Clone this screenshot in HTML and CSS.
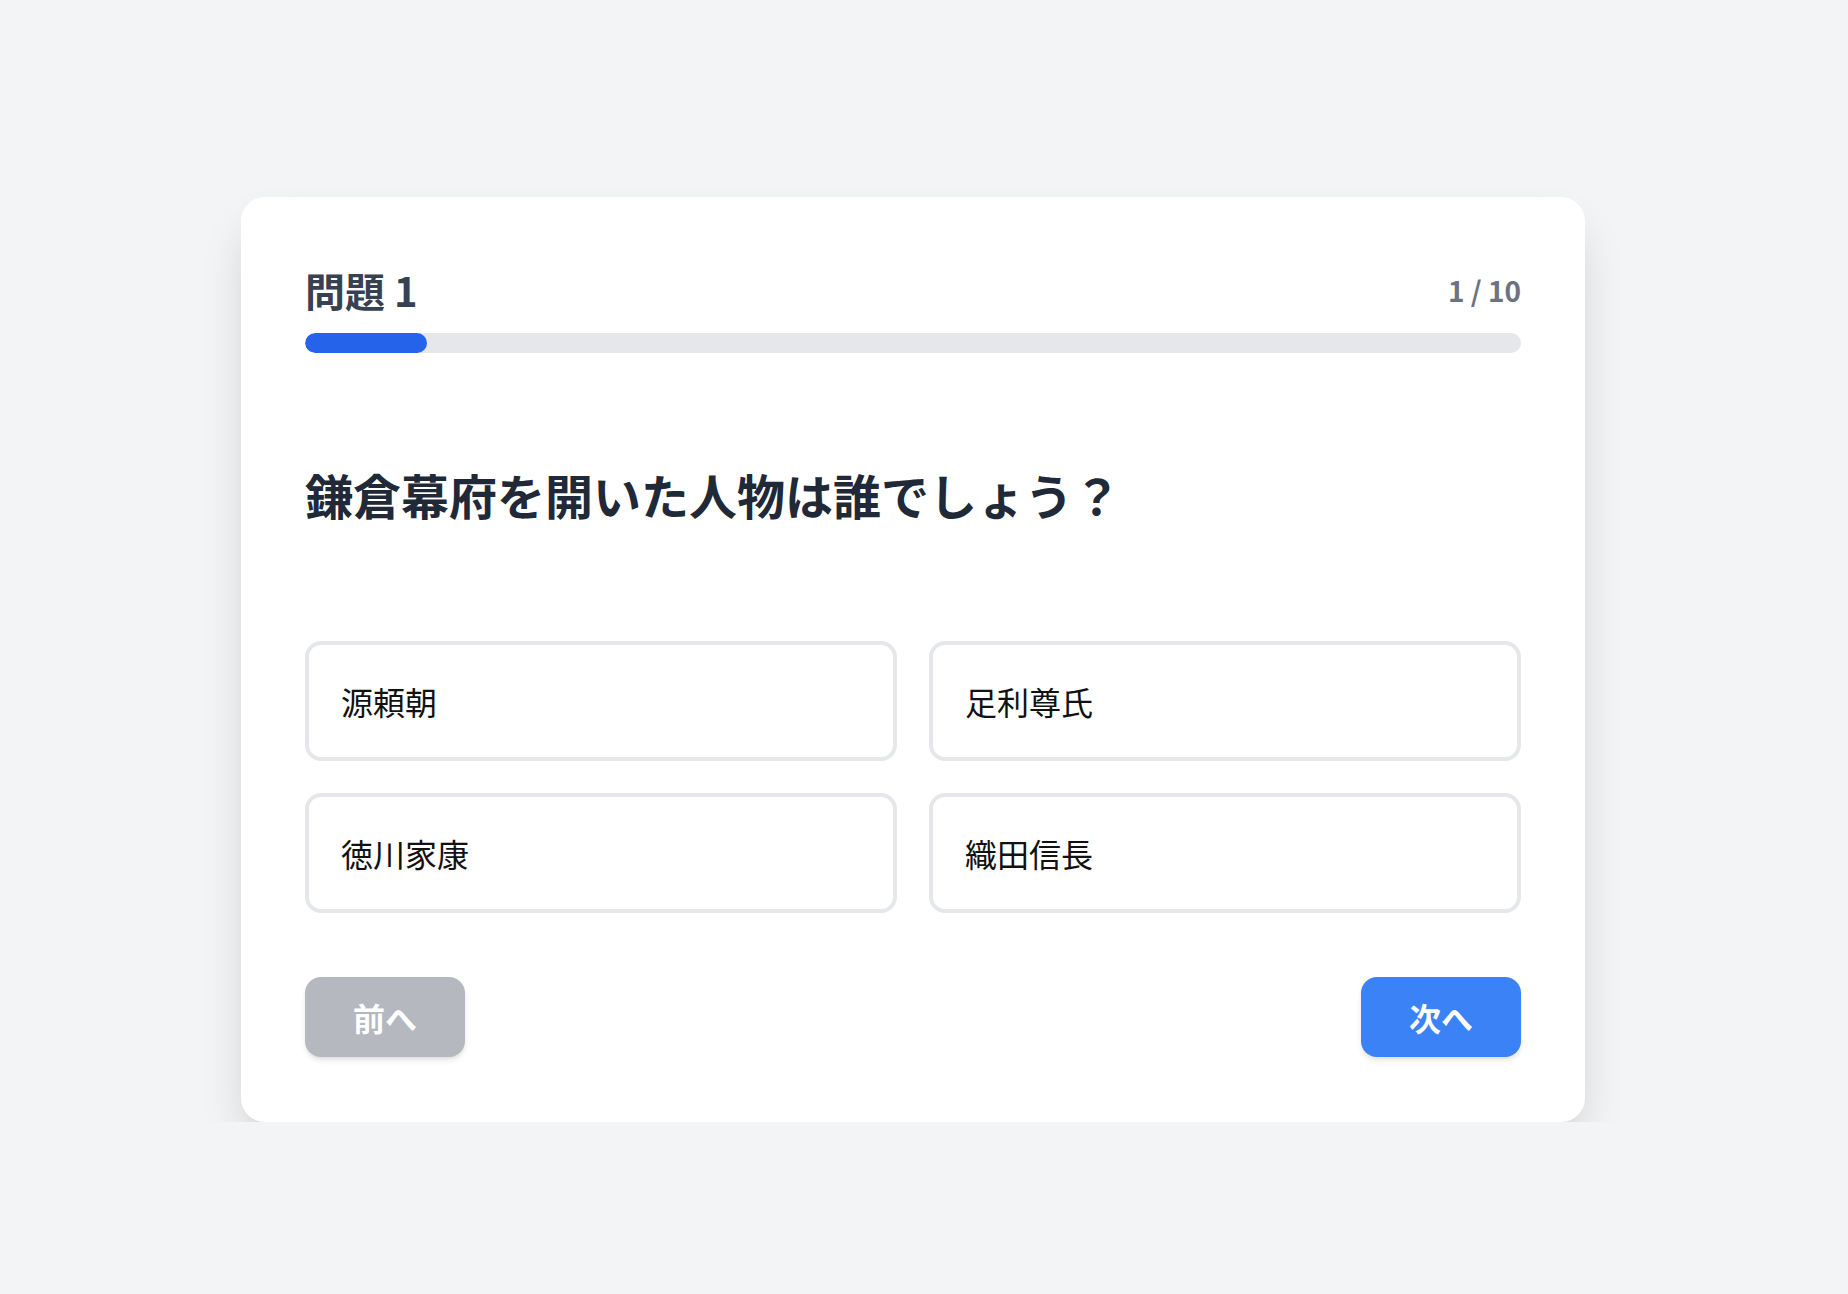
FILE: index.html
```html
<!DOCTYPE html>
<html lang="ja">
	<head>
		<meta charset="UTF-8" />
		<meta name="viewport" content="width=device-width, initial-scale=1.0" />
		<title>クイズ</title>
		<link rel="stylesheet" href="styles.css">
	</head>

	<body>
		<main class="quiz">
			<!-- en-tête : numéro de question et compteur -->
			<div class="quiz-header">
				<h1 class="quiz-title">問題 1</h1>
				<span class="quiz-count">1 / 10</span>
			</div>

			<div class="progress">
				<div class="progress-bar" style="width: 10%"></div>
			</div>

			<h2 class="question">鎌倉幕府を開いた人物は誰でしょう？</h2>

			<div class="choices">
				<button class="choice">源頼朝</button>
				<button class="choice">足利尊氏</button>
				<button class="choice">徳川家康</button>
				<button class="choice">織田信長</button>
			</div>

			<div class="quiz-nav">
				<button class="nav-btn nav-prev" disabled>前へ</button>
				<button class="nav-btn nav-next">次へ</button>
			</div>
		</main>
	</body>
</html>
```

FILE: styles.css
```css
body {
	font-family: "Noto Sans CJK JP", "Noto Sans", sans-serif;
	background-color: #f3f4f6;
	margin: 0;
	padding: 0;
}
.quiz {
	width: 1344px;
	box-sizing: border-box;
	margin: 197px 0 0 241px;
	padding: 63px 64px 65px;
	background-color: white;
	border-radius: 24px;
	box-shadow: 0 25px 50px -12px rgba(0, 0, 0, 0.2);
}
.quiz-header {
	display: flex;
	justify-content: space-between;
	align-items: center;
	margin-bottom: 13px;
}
.quiz-title {
	margin: 0;
	font-size: 40px;
	line-height: 60px;
	font-weight: 700;
	color: #374151;
}
.quiz-count {
	font-size: 28px;
	font-weight: 700;
	color: #6b7280;
}
.progress {
	height: 20px;
	background-color: #e5e7eb;
	border-radius: 10px;
	overflow: hidden;
}
.progress-bar {
	height: 100%;
	background-color: #2563eb;
	border-radius: 10px;
}
.question {
	margin: 105px 0 111px;
	font-size: 48px;
	line-height: 72px;
	font-weight: 700;
	color: #1f2937;
}
.choices {
	display: grid;
	grid-template-columns: 1fr 1fr;
	gap: 32px;
}
.choice {
	font-family: inherit;
	font-size: 32px;
	line-height: 48px;
	text-align: left;
	color: #111;
	background-color: white;
	border: 4px solid #e5e7eb;
	border-radius: 16px;
	padding: 32px;
}
.quiz-nav {
	display: flex;
	justify-content: space-between;
	margin-top: 64px;
}
.nav-btn {
	font-family: inherit;
	font-size: 32px;
	line-height: 48px;
	font-weight: 700;
	color: white;
	border: none;
	border-radius: 16px;
	padding: 16px 48px;
	box-shadow: 0 4px 6px -1px rgba(0, 0, 0, 0.1), 0 2px 4px -2px rgba(0, 0, 0, 0.1);
}
.nav-prev {
	background-color: #b5b8bf;
}
.nav-next {
	background-color: #3b82f6;
}
```
